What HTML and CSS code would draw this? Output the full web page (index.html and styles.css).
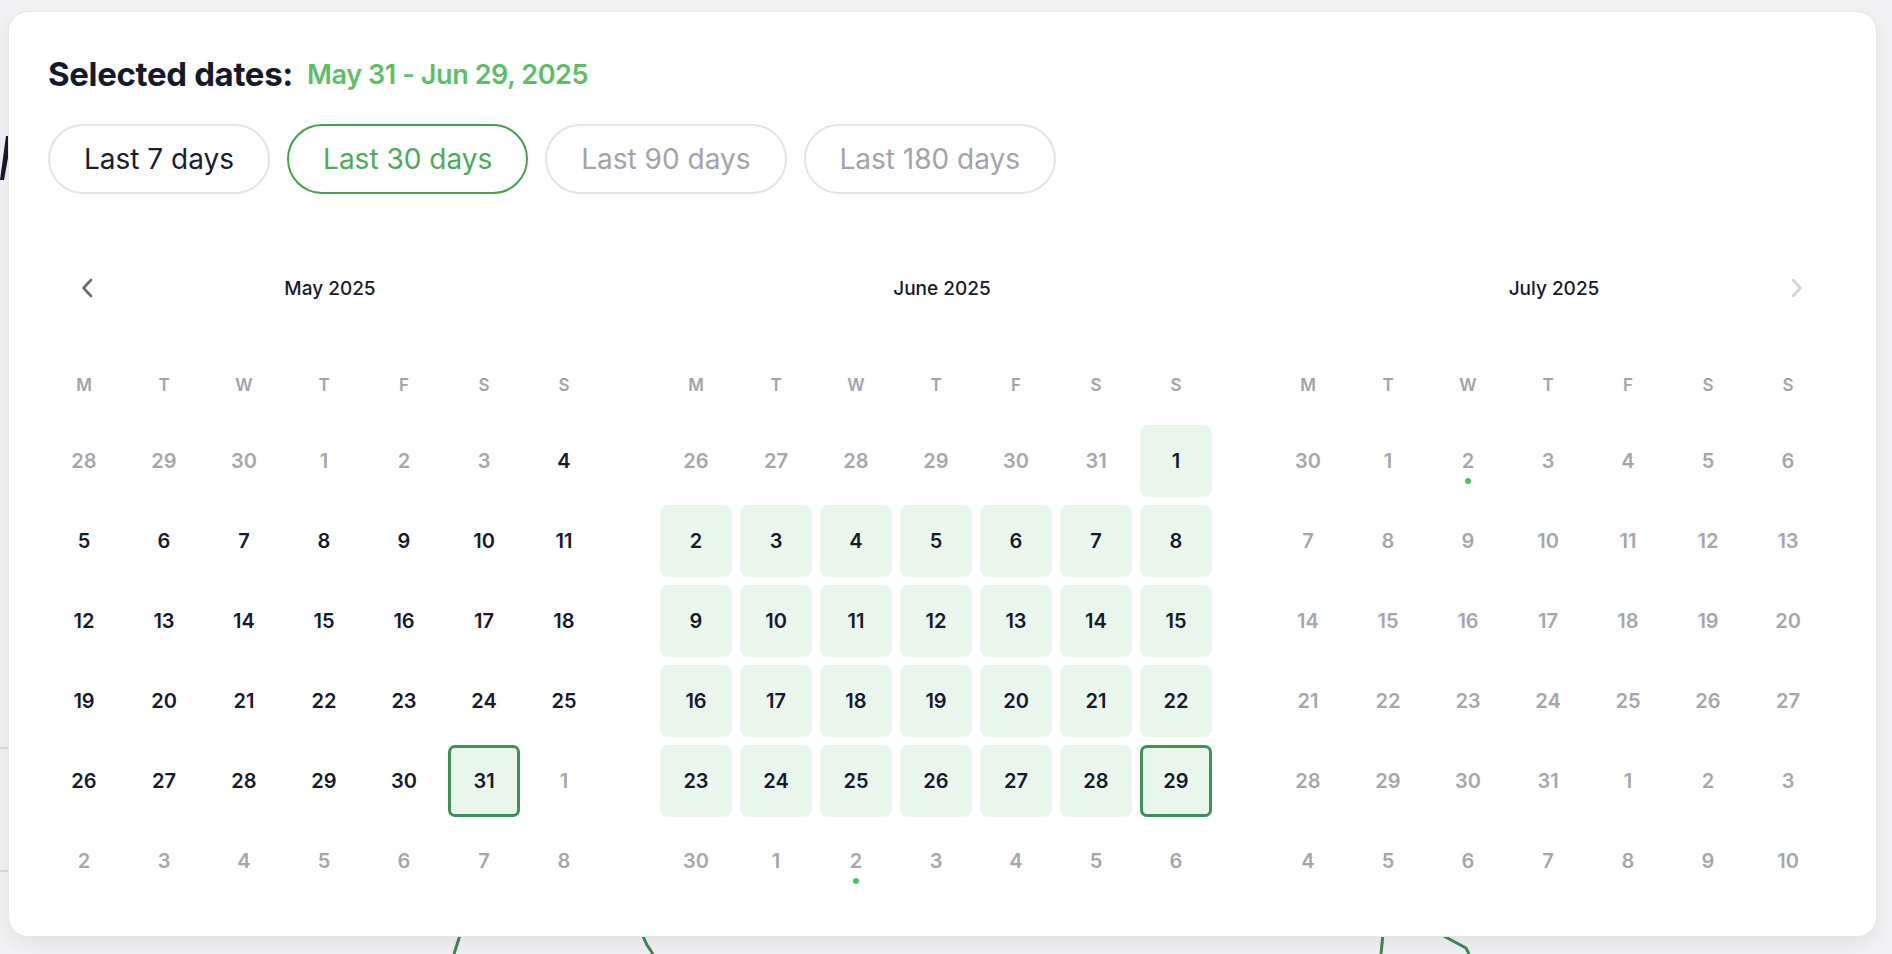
FILE: index.html
```html
<!DOCTYPE html>
<html lang="en">
<head>
<meta charset="utf-8">
<title>Date range picker</title>
<link rel="stylesheet" href="styles.css">
</head>
<body>
<svg class="backdrop" width="1892" height="954" viewBox="0 0 1892 954" aria-hidden="true">
  <polygon points="0,180 4,180 12,136 6,136" fill="#161a2c"/>
  <line x1="0" y1="748" x2="8" y2="748" stroke="#c9c9cf" stroke-width="1"/>
  <line x1="0" y1="871" x2="8" y2="871" stroke="#c9c9cf" stroke-width="1"/>
  <path d="M462 929 L454 954" stroke="#3b8a55" stroke-width="3" fill="none"/>
  <path d="M642 934 L647 945 L653 954" stroke="#3b8a55" stroke-width="3" fill="none"/>
  <path d="M1383 934 L1381 954" stroke="#3b8a55" stroke-width="3" fill="none"/>
  <path d="M1440 934 L1466 948 L1469 954" stroke="#3b8a55" stroke-width="3" fill="none"/>
</svg>

<div class="picker">
  <div class="summary">
    <span class="summary-label">Selected dates:</span>
    <span class="summary-range">May 31 - Jun 29, 2025</span>
  </div>

  <div class="presets">
    <button class="preset">Last 7 days</button>
    <button class="preset preset-active">Last 30 days</button>
    <button class="preset preset-disabled">Last 90 days</button>
    <button class="preset preset-disabled">Last 180 days</button>
  </div>

  <div class="months">
    <section class="month">
      <header class="month-head">
        <span class="nav nav-prev"><svg width="12" height="20" viewBox="0 0 12 20"><path d="M10 2 L2.5 10 L10 18" fill="none" stroke="#6b6b78" stroke-width="2.6" stroke-linecap="round" stroke-linejoin="round"/></svg></span>
        <span class="month-title">May 2025</span>
        <span class="nav-space"></span>
      </header>
      <div class="grid">
        <span class="wd">M</span><span class="wd">T</span><span class="wd">W</span><span class="wd">T</span><span class="wd">F</span><span class="wd">S</span><span class="wd">S</span>
        <span class="d m">28</span><span class="d m">29</span><span class="d m">30</span><span class="d m">1</span><span class="d m">2</span><span class="d m">3</span><span class="d">4</span>
        <span class="d">5</span><span class="d">6</span><span class="d">7</span><span class="d">8</span><span class="d">9</span><span class="d">10</span><span class="d">11</span>
        <span class="d">12</span><span class="d">13</span><span class="d">14</span><span class="d">15</span><span class="d">16</span><span class="d">17</span><span class="d">18</span>
        <span class="d">19</span><span class="d">20</span><span class="d">21</span><span class="d">22</span><span class="d">23</span><span class="d">24</span><span class="d">25</span>
        <span class="d">26</span><span class="d">27</span><span class="d">28</span><span class="d">29</span><span class="d">30</span><span class="d e">31</span><span class="d m">1</span>
        <span class="d m">2</span><span class="d m">3</span><span class="d m">4</span><span class="d m">5</span><span class="d m">6</span><span class="d m">7</span><span class="d m">8</span>
      </div>
    </section>

    <section class="month">
      <header class="month-head">
        <span class="nav-space"></span>
        <span class="month-title">June 2025</span>
        <span class="nav-space"></span>
      </header>
      <div class="grid">
        <span class="wd">M</span><span class="wd">T</span><span class="wd">W</span><span class="wd">T</span><span class="wd">F</span><span class="wd">S</span><span class="wd">S</span>
        <span class="d m">26</span><span class="d m">27</span><span class="d m">28</span><span class="d m">29</span><span class="d m">30</span><span class="d m">31</span><span class="d r">1</span>
        <span class="d r">2</span><span class="d r">3</span><span class="d r">4</span><span class="d r">5</span><span class="d r">6</span><span class="d r">7</span><span class="d r">8</span>
        <span class="d r">9</span><span class="d r">10</span><span class="d r">11</span><span class="d r">12</span><span class="d r">13</span><span class="d r">14</span><span class="d r">15</span>
        <span class="d r">16</span><span class="d r">17</span><span class="d r">18</span><span class="d r">19</span><span class="d r">20</span><span class="d r">21</span><span class="d r">22</span>
        <span class="d r">23</span><span class="d r">24</span><span class="d r">25</span><span class="d r">26</span><span class="d r">27</span><span class="d r">28</span><span class="d e">29</span>
        <span class="d m">30</span><span class="d m">1</span><span class="d m dot">2</span><span class="d m">3</span><span class="d m">4</span><span class="d m">5</span><span class="d m">6</span>
      </div>
    </section>

    <section class="month">
      <header class="month-head">
        <span class="nav-space"></span>
        <span class="month-title">July 2025</span>
        <span class="nav nav-next"><svg width="12" height="20" viewBox="0 0 12 20"><path d="M2 2 L9.5 10 L2 18" fill="none" stroke="#d4d4d9" stroke-width="2.6" stroke-linecap="round" stroke-linejoin="round"/></svg></span>
      </header>
      <div class="grid">
        <span class="wd">M</span><span class="wd">T</span><span class="wd">W</span><span class="wd">T</span><span class="wd">F</span><span class="wd">S</span><span class="wd">S</span>
        <span class="d m">30</span><span class="d m">1</span><span class="d m dot">2</span><span class="d m">3</span><span class="d m">4</span><span class="d m">5</span><span class="d m">6</span>
        <span class="d m">7</span><span class="d m">8</span><span class="d m">9</span><span class="d m">10</span><span class="d m">11</span><span class="d m">12</span><span class="d m">13</span>
        <span class="d m">14</span><span class="d m">15</span><span class="d m">16</span><span class="d m">17</span><span class="d m">18</span><span class="d m">19</span><span class="d m">20</span>
        <span class="d m">21</span><span class="d m">22</span><span class="d m">23</span><span class="d m">24</span><span class="d m">25</span><span class="d m">26</span><span class="d m">27</span>
        <span class="d m">28</span><span class="d m">29</span><span class="d m">30</span><span class="d m">31</span><span class="d m">1</span><span class="d m">2</span><span class="d m">3</span>
        <span class="d m">4</span><span class="d m">5</span><span class="d m">6</span><span class="d m">7</span><span class="d m">8</span><span class="d m">9</span><span class="d m">10</span>
      </div>
    </section>
  </div>
</div>
</body>
</html>
```

FILE: styles.css
```css
* {
  box-sizing: border-box;
}

html, body {
  height: 954px;
}

body {
  margin: 0;
  padding: 11px 15px 0 8px;
  background: #f3f3f5;
  font-family: Inter, "Liberation Sans", sans-serif;
  color: #161a2c;
  position: relative;
  overflow: hidden;
}

.backdrop {
  position: absolute;
  left: 0;
  top: 0;
  z-index: 0;
}

.picker {
  position: relative;
  z-index: 1;
  background: #ffffff;
  border: 1px solid #e6e6eb;
  border-radius: 20px;
  box-shadow: 0 8px 22px rgba(20, 20, 40, 0.08);
  padding: 39px;
}

.summary {
  display: flex;
  align-items: center;
  gap: 14px;
  height: 46px;
}

.summary-label {
  font-size: 33px;
  font-weight: 700;
  letter-spacing: -0.35px;
  color: #141a2c;
}

.summary-range {
  font-size: 27px;
  font-weight: 600;
  color: #5cbf67;
  letter-spacing: -0.4px;
}

.presets {
  display: flex;
  gap: 17px;
  margin-top: 27px;
}

.preset {
  height: 70px;
  padding: 0 34px;
  border: 2px solid #e3e3e8;
  border-radius: 35px;
  background: #ffffff;
  font-family: Inter, "Liberation Sans", sans-serif;
  font-size: 28px;
  font-weight: 400;
  color: #1a1d2e;
}

.preset-active {
  border-color: #45a050;
  color: #4daa58;
}

.preset-disabled {
  color: #a3a3ab;
}

.months {
  display: flex;
  gap: 48px;
  margin-top: 74px;
}

.month {
  width: 564px;
}

.month-head {
  display: grid;
  grid-template-columns: 1fr auto 1fr;
  align-items: center;
  height: 40px;
}

.month-title {
  font-size: 19px;
  font-weight: 500;
  color: #161a2c;
}

.nav {
  display: flex;
  align-items: center;
}

.nav-prev {
  justify-self: start;
  margin-left: 33px;
}

.nav-next {
  justify-self: end;
  margin-right: 33px;
}

.grid {
  display: grid;
  grid-template-columns: repeat(7, 72px);
  grid-template-rows: 64px repeat(6, 72px);
  gap: 8px;
  margin-top: 45px;
}

.wd {
  display: flex;
  align-items: center;
  justify-content: center;
  font-size: 17px;
  font-weight: 600;
  color: #a3a3ab;
}

.d {
  position: relative;
  display: flex;
  align-items: center;
  justify-content: center;
  font-size: 20px;
  font-weight: 600;
  color: #161a2c;
  border-radius: 8px;
}

.d.m {
  color: #a6a6ae;
  font-weight: 600;
}

.d.r {
  background: #e8f6ec;
}

.d.e {
  background: #e8f6ec;
  border: 3px solid #3e8f59;
  border-radius: 7px;
}

.dot::after {
  content: "";
  position: absolute;
  left: 50%;
  top: 50%;
  width: 6px;
  height: 6px;
  margin-left: -3px;
  margin-top: 17px;
  border-radius: 50%;
  background: #52bf62;
}
```
